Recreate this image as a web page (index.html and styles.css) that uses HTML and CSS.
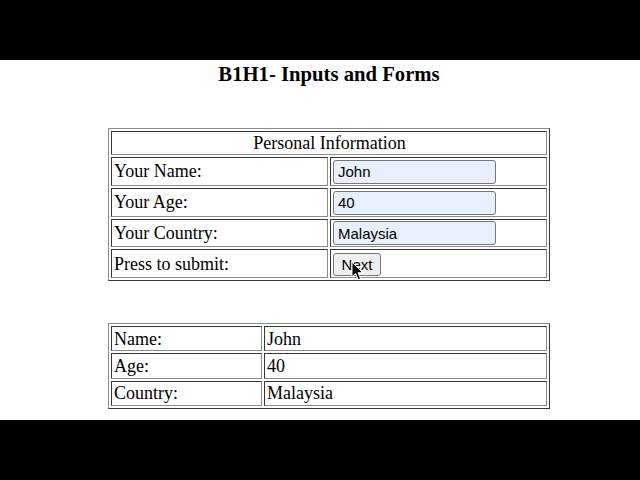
FILE: index.html
```html
<!DOCTYPE html>
<html>
<head>
<meta charset="utf-8">
<title>B1H1- Inputs and Forms</title>
<link rel="stylesheet" href="styles.css">
</head>
<body>
<div class="letterbox"></div>
<div class="screen">
  <div class="content">
    <h3 class="title">B1H1- Inputs and Forms</h3>
    <table class="grid form-table">
      <tr><td colspan="2" class="head">Personal Information</td></tr>
      <tr class="frow"><td class="fa">Your Name:</td><td class="fb"><input class="field" type="text" value="John"></td></tr>
      <tr class="frow"><td class="fa">Your Age:</td><td class="fb"><input class="field" type="text" value="40"></td></tr>
      <tr class="frow"><td class="fa">Your Country:</td><td class="fb"><input class="field" type="text" value="Malaysia"></td></tr>
      <tr class="frow"><td class="fa">Press to submit:</td><td class="fb"><span class="btn-wrap"><button class="btn" type="button">Next</button><svg class="cursor" width="13" height="20" viewBox="0 0 13 20"><path d="M1 1 L1 16 L4.6 12.6 L7.2 18.6 L9.6 17.6 L7 11.7 L11.8 11.7 Z" fill="#000" stroke="#fff" stroke-width="1" stroke-linejoin="round"/></svg></span></td></tr>
    </table>
    <table class="grid result-table">
      <tr class="rrow"><td class="ra">Name:</td><td class="rb">John</td></tr>
      <tr class="rrow"><td class="ra">Age:</td><td class="rb">40</td></tr>
      <tr class="rrow"><td class="ra">Country:</td><td class="rb">Malaysia</td></tr>
    </table>
  </div>
</div>
<div class="letterbox"></div>
</body>
</html>
```

FILE: styles.css
```css
html, body {
  margin: 0;
  padding: 0;
  background: #000;
}
.letterbox {
  height: 60px;
  background: #000;
}
.screen {
  height: 360px;
  background: #fff;
  overflow: hidden;
}
.content {
  margin-left: 108px;
  width: 442px;
  padding-top: 2px;
}
.title {
  margin: 0;
  text-align: center;
  font: bold 20.7px/24px "Liberation Serif", "Times New Roman", serif;
  color: #000;
}
.grid {
  width: 442px;
  table-layout: fixed;
  border: 1px outset #8a8a8a;
  border-spacing: 2px;
  font: 18px "Liberation Serif", "Times New Roman", serif;
  color: #000;
}
.grid td {
  box-sizing: border-box;
  border: 1px inset #8a8a8a;
  padding: 1px 1px 0 2px;
  vertical-align: middle;
  white-space: nowrap;
}
.form-table {
  margin-top: 42px;
}
.result-table {
  margin-top: 42px;
}
.head {
  text-align: center;
  height: 24px;
}
.frow td {
  height: 28.8px;
}
.fa, .fb {
  width: 217px;
}
.rrow td {
  height: 25.2px;
}
.ra {
  width: 151px;
}
.rb {
  width: 283px;
}
.field {
  box-sizing: border-box;
  display: block;
  width: 163px;
  height: 24px;
  margin: 0;
  padding: 0 4px;
  border: 1px solid #767676;
  border-radius: 3px;
  background: #e8f0fe;
  font: 15px "Liberation Sans", Arial, sans-serif;
  color: #000;
}
.btn-wrap {
  position: relative;
  display: inline-block;
  vertical-align: middle;
}
.btn {
  box-sizing: border-box;
  display: block;
  width: 48px;
  height: 23px;
  margin: 0;
  padding: 0;
  border: 1px solid #767676;
  border-radius: 3px;
  background: #efefef;
  font: 15px "Liberation Sans", Arial, sans-serif;
  color: #000;
}
.cursor {
  position: absolute;
  left: 18px;
  top: 8px;
}
```
